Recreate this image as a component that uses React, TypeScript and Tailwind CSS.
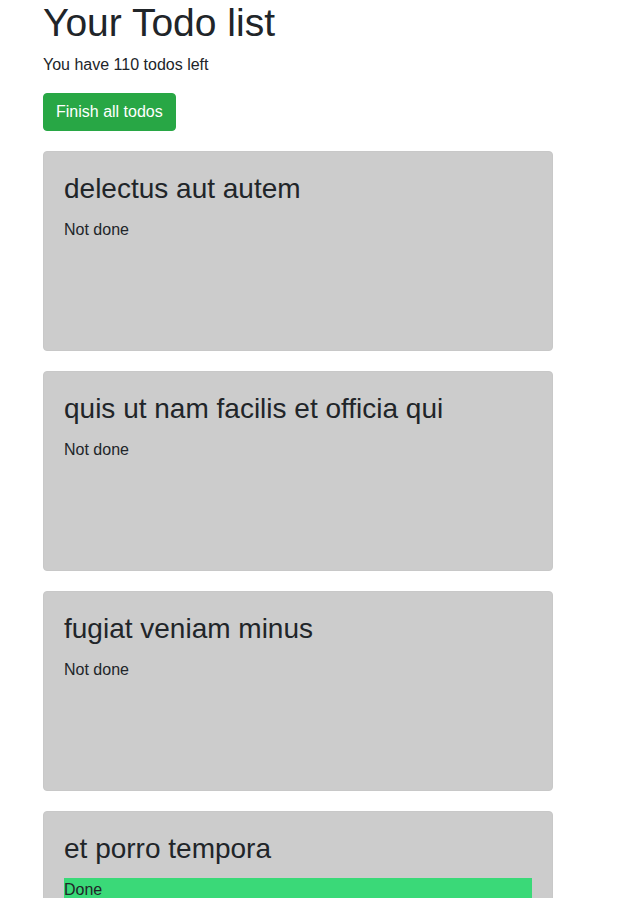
const todos = [
  { id: 1, title: 'delectus aut autem', done: false },
  { id: 2, title: 'quis ut nam facilis et officia qui', done: false },
  { id: 3, title: 'fugiat veniam minus', done: false },
  { id: 4, title: 'et porro tempora', done: true },
]

function TodoCard({ title, done }: { title: string; done: boolean }) {
  return (
    <div className="mb-5 h-[200px] rounded border border-[#c8c8c8] bg-[#cccccc] p-5">
      <h3 className="mb-3 text-[28px] leading-[1.2] font-medium text-[#212529]">{title}</h3>
      {done ? (
        <p className="bg-[#3ad978] text-base leading-6 text-[#212529]">Done</p>
      ) : (
        <p className="text-base leading-6 text-[#212529]">Not done</p>
      )}
    </div>
  )
}

export default function App() {
  return (
    <div className="h-[898px] overflow-hidden bg-white font-['Liberation_Sans',Arial,sans-serif] text-[#212529]">
      <div className="ml-[43px] w-[510px]">
        <h1 className="mb-2 text-[39px] leading-[45px] font-medium">Your Todo list</h1>
        <p className="mb-4 text-base leading-6">You have 110 todos left</p>
        <button className="mb-5 h-[38px] rounded border border-[#28a745] bg-[#28a745] px-3 text-base leading-6 text-white">
          Finish all todos
        </button>
        {todos.map(t => (
          <TodoCard key={t.id} title={t.title} done={t.done} />
        ))}
      </div>
    </div>
  )
}
